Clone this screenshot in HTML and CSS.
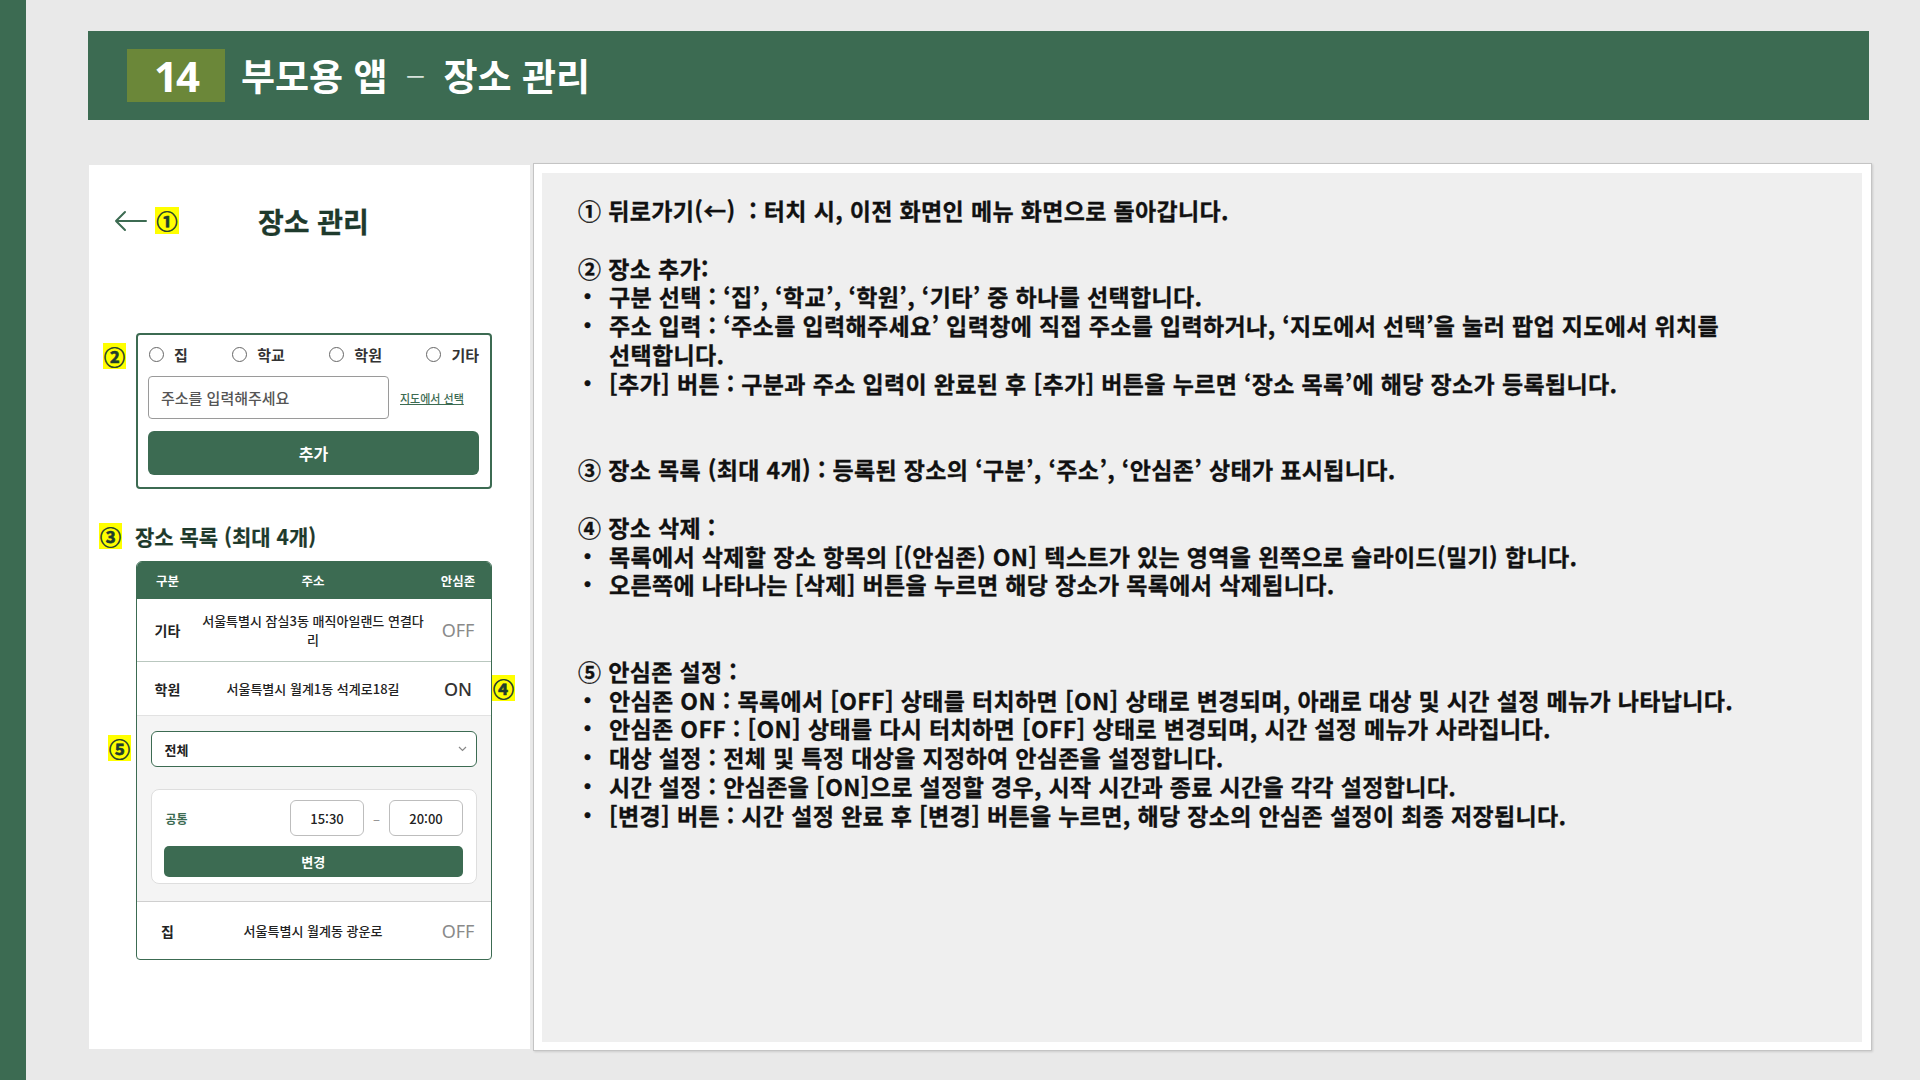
FILE: index.html
```html
<!DOCTYPE html>
<html lang="ko">
<head>
<meta charset="utf-8">
<title>부모용 앱 - 장소 관리</title>
<link rel="stylesheet" href="styles.css">
</head>
<body>
<div class="page">
  <div class="strip"></div>
  <div class="main">
    <div class="header">
      <div class="num">14</div>
      <div class="title">부모용 앱<span class="dash">–</span>장소 관리</div>
    </div>
    <div class="content">
      <div class="phone">
        <div class="topbar">
          <svg class="arrow" width="33" height="22" viewBox="0 0 33 22"><path d="M32 11H2M11 2L2 11L11 20" fill="none" stroke="#3c6b52" stroke-width="2" stroke-linecap="round" stroke-linejoin="round"/></svg>
          <div class="badge b1">①</div>
          <div class="ptitle">장소 관리</div>
        </div>

        <div class="sec2">
          <div class="badge b2">②</div>
          <div class="form">
            <div class="radios">
              <div class="radio"><span class="circle"></span><span class="rl">집</span></div>
              <div class="radio"><span class="circle"></span><span class="rl">학교</span></div>
              <div class="radio"><span class="circle"></span><span class="rl">학원</span></div>
              <div class="radio"><span class="circle"></span><span class="rl">기타</span></div>
            </div>
            <div class="inrow">
              <div class="input">주소를 입력해주세요</div>
              <div class="maplink">지도에서 선택</div>
            </div>
            <div class="addbtn">추가</div>
          </div>
        </div>

        <div class="sec3">
          <div class="badge b3">③</div>
          <div class="h3">장소 목록 (최대 4개)</div>
        </div>

        <div class="tablerow">
          <div class="lcol"><div class="badge b5">⑤</div></div>
          <div class="table">
            <div class="row thead"><span>구분</span><span>주소</span><span>안심존</span></div>
            <div class="row r1"><span class="kind">기타</span><span class="addr">서울특별시 잠실3동 매직아일랜드 연결다<br>리</span><span class="off">OFF</span></div>
            <div class="row r2"><span class="kind">학원</span><span class="addr">서울특별시 월계1동 석계로18길</span><span class="on">ON</span></div>
            <div class="expand">
              <div class="select"><span>전체</span><svg width="9" height="6" viewBox="0 0 9 6"><path d="M1 1L4.5 4.5L8 1" fill="none" stroke="#888" stroke-width="1.2"/></svg></div>
              <div class="tcard">
                <div class="trow">
                  <span class="common">공통</span>
                  <span class="tbox">15:30</span>
                  <span class="tdash">–</span>
                  <span class="tbox">20:00</span>
                </div>
                <div class="chbtn">변경</div>
              </div>
            </div>
            <div class="row r3"><span class="kind">집</span><span class="addr">서울특별시 월계동 광운로</span><span class="off">OFF</span></div>
          </div>
          <div class="rcol"><div class="badge b4">④</div></div>
        </div>
      </div>

      <div class="desc">
        <div class="desc-inner">
          <div class="ln">① 뒤로가기(←)&nbsp; : 터치 시, 이전 화면인 메뉴 화면으로 돌아갑니다.</div>

          <div class="sec gap1">
            <div class="ln">② 장소 추가:</div>
            <div class="ln bl"><span class="dot">•</span><span>구분 선택 : ‘집’, ‘학교’, ‘학원’, ‘기타’ 중 하나를 선택합니다.</span></div>
            <div class="ln bl"><span class="dot">•</span><span>주소 입력 : ‘주소를 입력해주세요’ 입력창에 직접 주소를 입력하거나, ‘지도에서 선택’을 눌러 팝업 지도에서 위치를<br>선택합니다.</span></div>
            <div class="ln bl"><span class="dot">•</span><span>[추가] 버튼 : 구분과 주소 입력이 완료된 후 [추가] 버튼을 누르면 ‘장소 목록’에 해당 장소가 등록됩니다.</span></div>
          </div>

          <div class="sec gap2">
            <div class="ln">③ 장소 목록 (최대 4개) : 등록된 장소의 ‘구분’, ‘주소’, ‘안심존’ 상태가 표시됩니다.</div>
          </div>

          <div class="sec gap1">
            <div class="ln">④ 장소 삭제 :</div>
            <div class="ln bl"><span class="dot">•</span><span>목록에서 삭제할 장소 항목의 [(안심존) ON] 텍스트가 있는 영역을 왼쪽으로 슬라이드(밀기) 합니다.</span></div>
            <div class="ln bl"><span class="dot">•</span><span>오른쪽에 나타나는 [삭제] 버튼을 누르면 해당 장소가 목록에서 삭제됩니다.</span></div>
          </div>

          <div class="sec gap2">
            <div class="ln">⑤ 안심존 설정 :</div>
            <div class="ln bl"><span class="dot">•</span><span>안심존 ON : 목록에서 [OFF] 상태를 터치하면 [ON] 상태로 변경되며, 아래로 대상 및 시간 설정 메뉴가 나타납니다.</span></div>
            <div class="ln bl"><span class="dot">•</span><span>안심존 OFF : [ON] 상태를 다시 터치하면 [OFF] 상태로 변경되며, 시간 설정 메뉴가 사라집니다.</span></div>
            <div class="ln bl"><span class="dot">•</span><span>대상 설정 : 전체 및 특정 대상을 지정하여 안심존을 설정합니다.</span></div>
            <div class="ln bl"><span class="dot">•</span><span>시간 설정 : 안심존을 [ON]으로 설정할 경우, 시작 시간과 종료 시간을 각각 설정합니다.</span></div>
            <div class="ln bl"><span class="dot">•</span><span>[변경] 버튼 : 시간 설정 완료 후 [변경] 버튼을 누르면, 해당 장소의 안심존 설정이 최종 저장됩니다.</span></div>
          </div>
        </div>
      </div>
    </div>
  </div>
</div>
</body>
</html>
```

FILE: styles.css
```css
* { box-sizing: border-box; margin: 0; padding: 0; }
html, body { width: 1920px; height: 1080px; overflow: hidden; }
body {
  background: #e9e9e9;
  font-family: "Noto Sans CJK KR", "Noto Sans", sans-serif;
  color: #111;
}
.page { display: flex; height: 1080px; }
.strip { width: 26px; flex: none; background: #3c6b52; }
.main { padding-left: 62px; padding-top: 31px; }

/* header */
.header {
  width: 1781px; height: 89px; background: #3c6b52;
  display: flex; align-items: center; padding-left: 39px;
}
.num {
  width: 98px; height: 53px; background: #6b8739; color: #fff;
  font-family: "Noto Sans", sans-serif;
  font-size: 42px; font-weight: 700; line-height: 1;
  display: flex; align-items: center; justify-content: center;
  letter-spacing: -2px;
}
.title { margin-left: 16px; color: #fff; font-size: 37px; font-weight: 700; line-height: 1; }
.dash { font-weight: 300; margin: 0 18px; color: #d7e2dc; }

.content { display: flex; align-items: flex-start; margin-top: 43px; }

/* phone panel */
.phone { width: 441px; height: 884px; background: #fff; margin-top: 2px; margin-left: 1px; flex: none; }

.badge {
  background: #ffff00; color: #1f3d2e; font-weight: 700;
  width: 23px; height: 26px; font-size: 21px; line-height: 1;
  display: flex; align-items: center; justify-content: center; flex: none;
  -webkit-text-stroke: 0.6px #1f3d2e;
}
.topbar { display: flex; align-items: center; padding: 42px 0 0 25px; height: 69px; }
.arrow { flex: none; }
.b1 { margin-left: 8px; width: 24px; height: 27px; }
.ptitle { margin-left: 79px; font-size: 28px; font-weight: 700; color: #1e3a2c; line-height: 1; -webkit-text-stroke: 0.3px #1e3a2c; }

.sec2 { display: flex; align-items: flex-start; margin-top: 99px; }
.b2 { margin-left: 14px; margin-top: 10px; }
.form {
  margin-left: 10px; width: 356px; height: 156px;
  border: 2px solid #3c6b52; border-radius: 4px;
  padding: 8px 11px 12px 10px;
}
.radios { display: flex; justify-content: space-between; align-items: center; height: 22px; padding-left: 1px; }
.radio { display: flex; align-items: center; }
.circle { width: 15px; height: 15px; border: 1.5px solid #666; border-radius: 50%; background: #fff; }
.rl { margin-left: 10px; font-size: 15px; font-weight: 700; color: #333; line-height: 1; }
.inrow { display: flex; align-items: center; margin-top: 11px; }
.input {
  width: 241px; height: 43px; border: 1px solid #9a9a9a; border-radius: 4px;
  padding-left: 12px; display: flex; align-items: center;
  font-size: 15px; font-weight: 500; color: #555;
}
.maplink { margin-left: 11px; font-size: 11px; font-weight: 500; color: #3c6b52; text-decoration: underline; }
.addbtn {
  margin-top: 12px; height: 44px; background: #3c6b52; border-radius: 6px;
  color: #fff; font-size: 16px; font-weight: 700;
  display: flex; align-items: center; justify-content: center;
}

.sec3 { display: flex; align-items: center; margin-top: 34px; padding-left: 10px; }
.h3 { margin-left: 13px; font-size: 21px; font-weight: 700; color: #1e3a2c; line-height: 1; -webkit-text-stroke: 0.2px #1e3a2c; }

.tablerow { display: flex; align-items: flex-start; margin-top: 12px; }
.lcol { width: 47px; flex: none; }
.b5 { margin-left: 19px; margin-top: 174px; }
.rcol { flex: none; }
.b4 { margin-top: 114px; }

.table {
  width: 356px; flex: none;
  border: 1.5px solid #3c6b52; border-radius: 6px 6px 4px 4px; overflow: hidden;
}
.row {
  display: grid; grid-template-columns: 41px 1fr 40px; align-items: center;
  padding: 0 13px 0 10px; text-align: center;
}
.thead { height: 37px; background: #3c6b52; color: #fff; font-size: 12.5px; font-weight: 700; }
.r1 { height: 62px; }
.r2 { height: 54px; border-top: 1px solid #b9c7bf; }
.r3 { height: 58px; border-top: 1px solid #cfcfcf; }
.kind { font-size: 14px; font-weight: 700; color: #222; }
.addr { font-size: 13px; font-weight: 500; color: #222; line-height: 19px; }
.off { font-family: "Noto Sans", sans-serif; font-size: 18px; font-weight: 400; color: #8a8a8a; }
.on { font-family: "Noto Sans", sans-serif; font-size: 18px; font-weight: 500; color: #333; }

.expand {
  height: 186px; background: #f4f4f4; border-top: 1px solid #e2e2e2;
  padding: 15px 14px 0 13.5px;
}
.select {
  height: 36px; background: #fff; border: 1.5px solid #3c6b52; border-radius: 6px;
  display: flex; align-items: center; justify-content: space-between;
  padding: 0 9px 0 13px; font-size: 13px; font-weight: 700; color: #222;
}
.tcard {
  margin-top: 22px; height: 95px; background: #fff;
  border: 1px solid #dedede; border-radius: 8px;
  padding: 10px 13px 7px 12px;
}
.trow { display: flex; align-items: center; height: 36px; }
.common { flex: 1; margin-left: 2px; font-size: 12px; font-weight: 700; color: #3c6b52; }
.tbox {
  width: 74px; height: 36px; border: 1px solid #bdbdbd; border-radius: 6px;
  display: flex; align-items: center; justify-content: center;
  font-size: 13px; font-weight: 500; color: #222;
}
.tdash { width: 25px; text-align: center; color: #888; font-size: 13px; }
.chbtn {
  margin-top: 10px; height: 31px; background: #3c6b52; border-radius: 5px;
  color: #fff; font-size: 13px; font-weight: 700;
  display: flex; align-items: center; justify-content: center;
}

/* description panel */
.desc {
  width: 1339px; height: 888px; margin-left: 3px; flex: none;
  border: 1px solid #c4c4c4; background: #fff;
  padding: 9px 9px 8px 8px;
  box-shadow: 1px 1px 2px rgba(0,0,0,0.12);
}
.desc-inner {
  background: #efefef; height: 100%;
  padding: 23px 0 0 36px;
  font-size: 23px; font-weight: 700; line-height: 28.8px; color: #111;
  letter-spacing: 0.35px;
  -webkit-text-stroke: 0.3px #111;
}
.ln { white-space: nowrap; }
.bl { display: flex; }
.dot { width: 31px; flex: none; padding-left: 6px; font-family: "Liberation Sans", sans-serif; font-size: 20px; }
.gap1 { margin-top: 28.8px; }
.gap2 { margin-top: 57.6px; }
```
